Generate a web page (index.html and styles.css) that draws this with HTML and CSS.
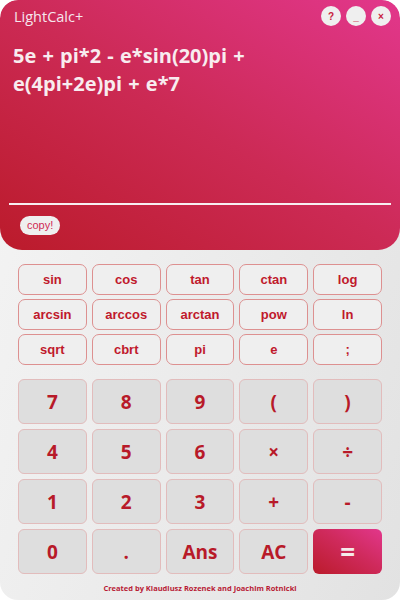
FILE: index.html
```html
<!DOCTYPE html>
<html>
<head>
<meta charset="utf-8">
<link rel="stylesheet" href="styles.css">
</head>
<body>
<div class="app">
  <header class="top">
    <div class="titlebar">
      <span class="title">LightCalc+</span>
      <div class="winbtns">
        <span class="wbtn">?</span>
        <span class="wbtn">_</span>
        <span class="wbtn">×</span>
      </div>
    </div>
    <div class="expr">5e + pi*2 - e*sin(20)pi + e(4pi+2e)pi + e*7</div>
    <div class="rule"></div>
    <div class="copyrow"><span class="copy">copy!</span></div>
  </header>
  <div class="funcs">
    <button class="fb">sin</button><button class="fb">cos</button><button class="fb">tan</button><button class="fb">ctan</button><button class="fb">log</button>
    <button class="fb">arcsin</button><button class="fb">arccos</button><button class="fb">arctan</button><button class="fb">pow</button><button class="fb">ln</button>
    <button class="fb">sqrt</button><button class="fb">cbrt</button><button class="fb">pi</button><button class="fb">e</button><button class="fb">;</button>
  </div>
  <div class="keys">
    <button class="kb">7</button><button class="kb">8</button><button class="kb">9</button><button class="kb">(</button><button class="kb">)</button>
    <button class="kb">4</button><button class="kb">5</button><button class="kb">6</button><button class="kb">×</button><button class="kb">÷</button>
    <button class="kb">1</button><button class="kb">2</button><button class="kb">3</button><button class="kb">+</button><button class="kb">-</button>
    <button class="kb">0</button><button class="kb">.</button><button class="kb">Ans</button><button class="kb">AC</button><button class="kb eq">=</button>
  </div>
  <footer class="credit">Created by Klaudiusz Rozenek and Joachim Rotnicki</footer>
</div>
</body>
</html>
```
FILE: styles.css
```css
html, body {
  margin: 0;
  padding: 0;
  background: #ffffff;
}
.app {
  width: 400px;
  height: 600px;
  border-radius: 18px;
  overflow: hidden;
  background: linear-gradient(110deg, #f5f5f5 0%, #ebebeb 55%, #e2e2e2 100%);
  display: flex;
  flex-direction: column;
  font-family: "Open Sans", "Noto Sans", sans-serif;
}
.top {
  height: 250px;
  box-sizing: border-box;
  border-radius: 18px 18px 22px 22px;
  background: linear-gradient(to top right, #bb1b2b 0%, #cc2a55 50%, #e2378c 100%);
  color: #fff;
  display: flex;
  flex-direction: column;
}
.titlebar {
  display: flex;
  justify-content: space-between;
  align-items: center;
  height: 32px;
  padding: 0 9px 0 14px;
}
.title {
  font-size: 14.5px;
  color: #f6e6ee;
}
.winbtns {
  display: flex;
  gap: 5px;
}
.wbtn {
  width: 20px;
  height: 20px;
  border-radius: 50%;
  background: #efefef;
  color: #c8203c;
  font-family: "Liberation Sans", sans-serif;
  font-weight: bold;
  font-size: 10px;
  display: flex;
  align-items: center;
  justify-content: center;
}
.expr {
  margin-top: 10px;
  padding: 0 13px;
  width: 300px;
  font-size: 20px;
  font-weight: 700;
  line-height: 28px;
  word-spacing: 1px;
  color: #f8ecef;
  flex: 1;
}
.rule {
  height: 2px;
  background: #f7eef1;
  margin: 0 9px;
}
.copyrow {
  padding: 11px 20px 15px;
  display: flex;
}
.copy {
  background: #efefef;
  color: #cf2a55;
  font-family: "Liberation Sans", sans-serif;
  font-size: 11px;
  height: 19px;
  line-height: 19px;
  padding: 0 7px;
  border-radius: 10px;
}
.funcs {
  margin-top: 14px;
  padding: 0 18px;
  display: grid;
  grid-template-columns: repeat(5, 1fr);
  grid-auto-rows: 31px;
  gap: 4px 5px;
}
.fb {
  border: 1px solid #dd9090;
  border-radius: 7px;
  background: #efefef;
  color: #c0192c;
  font-family: "Liberation Sans", sans-serif;
  font-weight: bold;
  font-size: 13px;
  padding: 0;
}
.keys {
  margin-top: 14px;
  padding: 0 18px;
  display: grid;
  grid-template-columns: repeat(5, 1fr);
  grid-auto-rows: 45px;
  gap: 5px;
}
.kb {
  border: 1px solid #e2bcbc;
  border-radius: 6px;
  background: #dedede;
  color: #b81a29;
  font-family: "Open Sans", sans-serif;
  font-weight: 700;
  font-size: 19px;
  padding: 0;
}
.kb.eq {
  border: none;
  background: linear-gradient(to top right, #bb1b2b 0%, #cf2a5c 55%, #e2378c 100%);
  color: #f5eaea;
  font-size: 26px;
}
.credit {
  text-align: center;
  margin-top: 9px;
  font-family: "Open Sans", sans-serif;
  font-weight: 700;
  font-size: 7.5px;
  color: #b81a35;
}
```
